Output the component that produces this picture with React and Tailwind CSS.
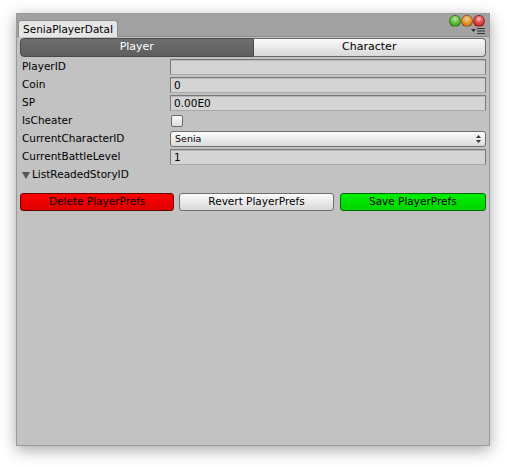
import React from "react";

const font = { fontFamily: '"Lucida Grande", "DejaVu Sans", "Liberation Sans", sans-serif' };

function Field({ value }) {
  return (
    <div className="h-[16px] w-[316px] border border-[#7a7a7a] border-b-[#a8a8a8] bg-[#d4d4d4] shadow-[inset_0_1px_0_#b8b8b8] px-[3px] text-[10.5px] leading-[14px] text-black">
      {value}
    </div>
  );
}

function Row({ label, children }) {
  return (
    <div className="flex items-center h-[18px]">
      <div className="w-[153px] pl-[5px] text-[10.5px] text-black">{label}</div>
      {children}
    </div>
  );
}

function Light({ c1, c2 }) {
  return (
    <div
      className="w-[12px] h-[12px] rounded-full border border-black/30"
      style={{ background: `radial-gradient(circle at 50% 30%, #fff8 0%, ${c1} 35%, ${c2} 100%)` }}
    />
  );
}

export default function App() {
  return (
    <div className="w-[507px] h-[467px] bg-white pt-[13px] pl-[16px]" style={font}>
      <div className="w-[474px] h-[433px] bg-[#c2c2c2] shadow-[0_4px_14px_rgba(0,0,0,0.35)] border border-[#9a9a9a] flex flex-col">
        <div className="relative h-[23px] bg-[#a2a2a2] border-b border-[#8a8a8a] flex items-end pl-[1px]">
          <div className="h-[17px] px-[4px] bg-[#e6e6e6] rounded-t-[3px] border border-b-0 border-[#8c8c8c] text-[10.5px] leading-[16px] text-black -mb-[1px]">
            SeniaPlayerDataI
          </div>
          <div className="absolute right-[4px] top-[1px] flex gap-[0px]">
            <Light c1="#6cd147" c2="#2f8a1a" />
            <Light c1="#f2a93a" c2="#c25a08" />
            <Light c1="#f05a5a" c2="#b01010" />
          </div>
          <div className="absolute right-[4px] top-[14px] flex items-center gap-[1px]">
            <svg width="5" height="4" viewBox="0 0 5 4"><path d="M0 0 L5 0 L2.5 3 Z" fill="#333" /></svg>
            <svg width="8" height="6" viewBox="0 0 8 6"><path d="M0 0.5 H8 M0 3 H8 M0 5.5 H8" stroke="#333" strokeWidth="1" /></svg>
          </div>
        </div>
        <div className="flex mx-[3px] mt-[1px] h-[19px] text-[11px]">
          <div className="flex-1 flex items-center justify-center rounded-l-[4px] border border-[#4a4a4a] bg-gradient-to-b from-[#6e6e6e] to-[#5e5e5e] text-white">
            Player
          </div>
          <div className="flex-1 flex items-center justify-center rounded-r-[4px] border border-l-0 border-[#6a6a6a] bg-gradient-to-b from-[#fafafa] to-[#d8d8d8] text-black">
            Character
          </div>
        </div>
        <div className="mt-[1px] flex flex-col">
          <Row label="PlayerID"><Field value="" /></Row>
          <Row label="Coin"><Field value="0" /></Row>
          <Row label="SP"><Field value="0.00E0" /></Row>
          <Row label="IsCheater">
            <div className="ml-[1px] w-[12px] h-[12px] rounded-[2px] border border-[#6a6a6a] bg-gradient-to-b from-[#fbfbfb] to-[#dcdcdc]" />
          </Row>
          <Row label="CurrentCharacterID">
            <div className="h-[16px] w-[316px] flex items-center justify-between rounded-[3px] border border-[#6e6e6e] bg-gradient-to-b from-[#fcfcfc] to-[#dadada] px-[4px] text-[9.5px] text-black">
              <span>Senia</span>
              <svg width="5" height="8" viewBox="0 0 5 8"><path d="M0 3 L2.5 0 L5 3 Z M0 5 L2.5 8 L5 5 Z" fill="#333" /></svg>
            </div>
          </Row>
          <Row label="CurrentBattleLevel"><Field value="1" /></Row>
          <div className="flex items-center h-[18px] pl-[5px] text-[10.5px] text-black gap-[2px]">
            <svg width="8" height="8" viewBox="0 0 8 8"><path d="M0 1 L8 1 L4 8 Z" fill="#555" /></svg>
            <span>ListReadedStoryID</span>
          </div>
        </div>
        <div className="flex mx-[3px] mt-[9px] gap-[5px] h-[18px] text-[10.5px]">
          <div className="w-[155px] flex items-center justify-center rounded-[3px] border border-[#6a0000] bg-gradient-to-b from-[#ff0000] to-[#dd0000] text-black">
            Delete PlayerPrefs
          </div>
          <div className="w-[155px] flex items-center justify-center rounded-[3px] border border-[#6e6e6e] bg-gradient-to-b from-[#fcfcfc] to-[#d8d8d8] text-black">
            Revert PlayerPrefs
          </div>
          <div className="ml-[1px] w-[147px] flex items-center justify-center rounded-[3px] border border-[#006a00] bg-gradient-to-b from-[#00f000] to-[#00d400] text-black">
            Save PlayerPrefs
          </div>
        </div>
      </div>
    </div>
  );
}
